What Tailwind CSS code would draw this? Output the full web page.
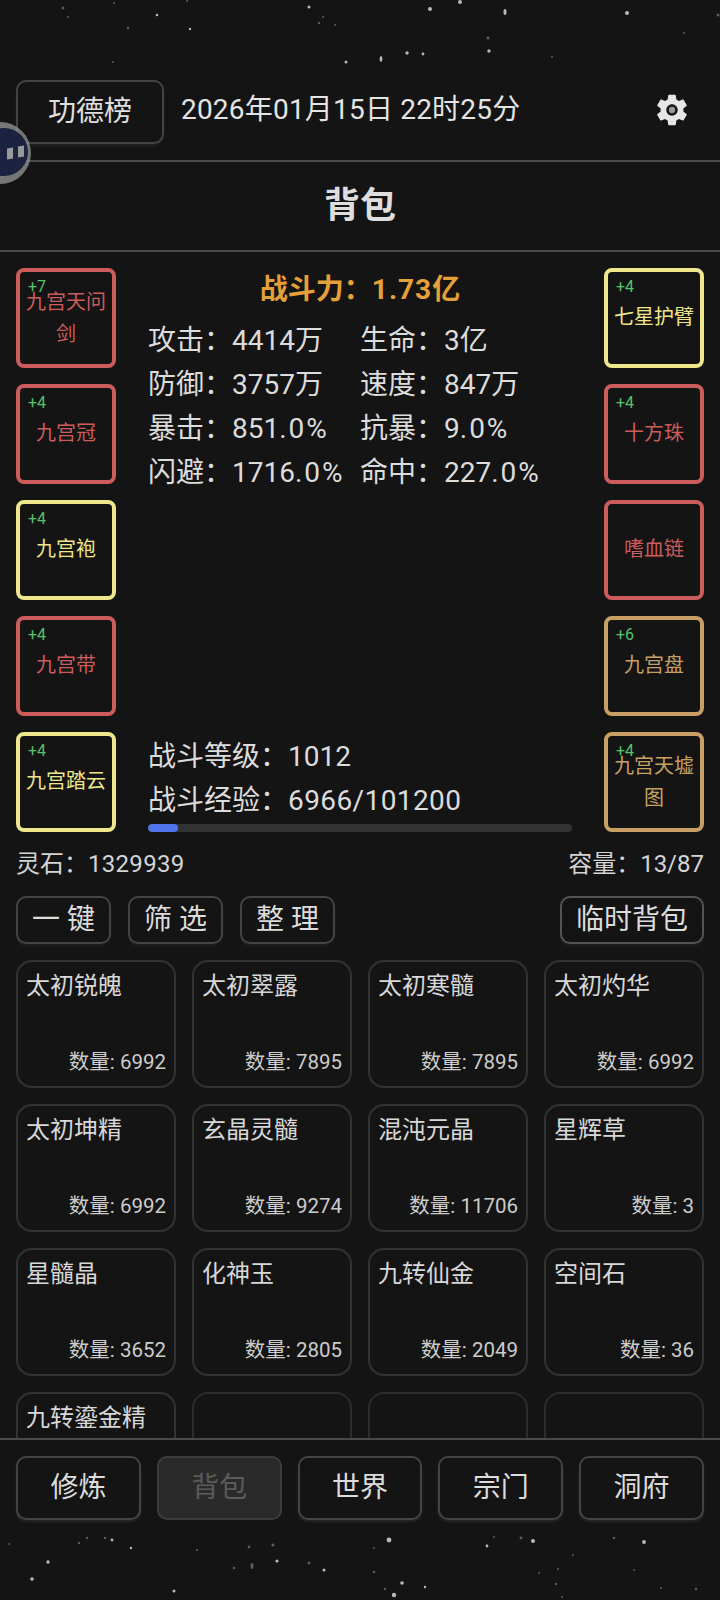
<!DOCTYPE html>
<html lang="zh-CN">
<head>
    <meta charset="UTF-8">
    <meta name="viewport" content="width=device-width, initial-scale=1.0">
    <title>背包</title>
    <script src="https://cdn.jsdelivr.net/npm/@tailwindcss/browser@4"></script>
</head>
<body class="bg-[#141414]">
<div class="relative w-[720px] h-[1600px] overflow-hidden flex flex-col bg-[#141414] text-[#e0e0e0] font-['Roboto','Noto_Sans_CJK_SC',sans-serif]">

    <!-- star background -->
    <svg class="absolute inset-0 w-[720px] h-[1600px] pointer-events-none" viewBox="0 0 720 1600" fill="#fff">
        <g opacity="0.7">
            <circle cx="430" cy="9" r="2"/><circle cx="460" cy="2" r="2"/><ellipse cx="505" cy="12" rx="1.5" ry="3"/><circle cx="627" cy="13" r="2"/>
            <circle cx="309" cy="7" r="1.5"/><circle cx="489" cy="51" r="1.7"/><circle cx="407" cy="53" r="1.7"/><circle cx="423" cy="54" r="1.4"/>
            <ellipse cx="381" cy="59" rx="1.4" ry="3"/><circle cx="346" cy="62" r="1.5"/><circle cx="157" cy="15" r="1.3"/><circle cx="190" cy="29" r="1.2"/>
            <circle cx="389" cy="1540" r="2.4"/><circle cx="644" cy="1542" r="1.9"/><circle cx="533" cy="1541" r="2"/><circle cx="487" cy="1546" r="1.4"/>
            <circle cx="112" cy="1540" r="1.4"/><circle cx="48" cy="1562" r="1.7"/><circle cx="32" cy="1579" r="1.8"/><circle cx="174" cy="1591" r="1.5"/>
            <circle cx="277" cy="1561" r="1.6"/><circle cx="324" cy="1570" r="1.5"/><circle cx="402" cy="1583" r="1.8"/><circle cx="394" cy="1595" r="2.2"/>
            <circle cx="425" cy="1587" r="1.2"/><circle cx="131" cy="1548" r="1.2"/>
        </g>
        <g opacity="0.3">
            <circle cx="63" cy="8" r="1.5"/><circle cx="68" cy="17" r="1"/><circle cx="114" cy="3" r="1"/><circle cx="128" cy="28" r="1.3"/>
            <circle cx="187" cy="1" r="1"/><circle cx="323" cy="17" r="1"/><circle cx="319" cy="23" r="1.2"/><circle cx="335" cy="25" r="1"/>
            <circle cx="718" cy="15" r="1.5"/><circle cx="488" cy="38" r="1.6"/><circle cx="113" cy="62" r="1"/><circle cx="552" cy="57" r="1"/><circle cx="684" cy="33" r="1"/>
            <circle cx="521" cy="1538" r="1.4"/><circle cx="614" cy="1538" r="1.3"/><circle cx="494" cy="1537" r="1"/><circle cx="105" cy="1538" r="1.3"/>
            <circle cx="87" cy="1538" r="1.2"/><circle cx="79" cy="1543" r="1.2"/><circle cx="249" cy="1547" r="1.4"/><circle cx="273" cy="1545" r="1.6"/>
            <circle cx="197" cy="1550" r="1.1"/><ellipse cx="252" cy="1566" rx="1.5" ry="3"/><circle cx="234" cy="1568" r="1.3"/><circle cx="309" cy="1563" r="1.4"/>
            <circle cx="374" cy="1572" r="1.3"/><circle cx="374" cy="1548" r="1"/><circle cx="385" cy="1589" r="1.2"/><circle cx="573" cy="1555" r="1"/>
            <circle cx="539" cy="1573" r="1"/><circle cx="558" cy="1569" r="1.1"/><circle cx="556" cy="1584" r="1.2"/><circle cx="562" cy="1597" r="1"/>
            <circle cx="634" cy="1570" r="1"/><circle cx="696" cy="1589" r="1.2"/><circle cx="661" cy="1588" r="1"/><circle cx="9" cy="1544" r="1"/>
        </g>
    </svg>

    <!-- top bar -->
    <div class="relative shrink-0 mt-[80px] h-[82px] border-b-2 border-[#4a4a4a] pl-4 pr-[29px] flex items-start">
        <button class="w-[148px] h-[64px] rounded-[10px] border-2 border-[#444] text-[28px] leading-8 text-[#e0e0e0] shadow-[0_2px_3px_rgba(255,255,255,0.06)]">功德榜</button>
        <div class="ml-[17px] h-[60px] flex items-center text-[28px] leading-8 tracking-[0.2px] text-[#e4e4e4]">2026年01月15日 22时25分</div>
        <svg class="ml-auto mt-[11px] w-[38px] h-[38px]" viewBox="0 0 24 24" fill="#e6e6e6">
            <path d="M19.14 12.94c.04-.3.06-.61.06-.94 0-.32-.02-.64-.07-.94l2.03-1.58c.18-.14.23-.41.12-.61l-1.92-3.32c-.12-.22-.37-.29-.59-.22l-2.39.96c-.5-.38-1.03-.7-1.62-.94l-.36-2.54c-.04-.24-.24-.41-.48-.41h-3.84c-.24 0-.43.17-.47.41l-.36 2.54c-.59.24-1.13.57-1.62.94l-2.39-.96c-.22-.08-.47 0-.59.22L2.74 8.87c-.12.21-.08.47.12.61l2.03 1.58c-.05.3-.09.63-.09.94s.02.64.07.94l-2.03 1.58c-.18.14-.23.41-.12.61l1.92 3.32c.12.22.37.29.59.22l2.39-.96c.5.38 1.03.7 1.62.94l.36 2.54c.05.24.24.41.48.41h3.84c.24 0 .44-.17.47-.41l.36-2.54c.59-.24 1.13-.56 1.62-.94l2.39.96c.22.08.47 0 .59-.22l1.92-3.32c.12-.22.07-.47-.12-.61l-2.01-1.58zM12 15.6c-1.98 0-3.6-1.62-3.6-3.6s1.62-3.6 3.6-3.6 3.6 1.62 3.6 3.6-1.62 3.6-3.6 3.6z"/>
            <circle cx="12" cy="12" r="2" fill="#999"/>
        </svg>
    </div>

    <!-- title -->
    <div class="shrink-0 h-[90px] border-b-2 border-[#4a4a4a] flex items-center justify-center text-[36px] leading-10 font-bold text-[#dedede]">背包</div>

    <div class="flex-1 min-h-0 overflow-hidden px-4">
        <!-- equipment and stats -->
        <div class="flex justify-between pt-4">
            <div class="w-[100px] flex flex-col gap-4">
                <div class="relative h-[100px] rounded-lg border-4 border-[#cd5c5c] flex items-center justify-center text-center text-[20px] leading-8 text-[#cd5c5c]"><span class="absolute left-2 top-[3px] text-[16px] leading-6 text-[#55c46a]">+7</span>九宫天问剑</div>
                <div class="relative h-[100px] rounded-lg border-4 border-[#cd5c5c] flex items-center justify-center text-center text-[20px] leading-8 text-[#cd5c5c] pb-[2px]"><span class="absolute left-2 top-[3px] text-[16px] leading-6 text-[#55c46a]">+4</span>九宫冠</div>
                <div class="relative h-[100px] rounded-lg border-4 border-[#f0e68c] flex items-center justify-center text-center text-[20px] leading-8 text-[#f0e68c] pb-[2px]"><span class="absolute left-2 top-[3px] text-[16px] leading-6 text-[#55c46a]">+4</span>九宫袍</div>
                <div class="relative h-[100px] rounded-lg border-4 border-[#cd5c5c] flex items-center justify-center text-center text-[20px] leading-8 text-[#cd5c5c] pb-[2px]"><span class="absolute left-2 top-[3px] text-[16px] leading-6 text-[#55c46a]">+4</span>九宫带</div>
                <div class="relative h-[100px] rounded-lg border-4 border-[#f0e68c] flex items-center justify-center text-center text-[20px] leading-8 text-[#f0e68c] pb-[2px]"><span class="absolute left-2 top-[3px] text-[16px] leading-6 text-[#55c46a]">+4</span>九宫踏云</div>
            </div>

            <div class="w-[424px] flex flex-col justify-between">
                <div>
                    <div class="text-center text-[28px] leading-[44px] font-bold text-[#e6a03a]">战斗力&#xFF1A;<span class="tracking-[1px]">1.73</span>亿</div>
                    <div class="grid grid-cols-[212px_1fr] text-[28px] leading-[44px] text-[#dcdcdc] mt-[7px]">
                        <div>攻击&#xFF1A;4414万</div><div>生命&#xFF1A;3亿</div>
                        <div>防御&#xFF1A;3757万</div><div>速度&#xFF1A;847万</div>
                        <div>暴击&#xFF1A;851<span class="tracking-[2px]">.0%</span></div><div>抗暴&#xFF1A;9<span class="tracking-[2px]">.0%</span></div>
                        <div>闪避&#xFF1A;1716<span class="tracking-[2px]">.0%</span></div><div>命中&#xFF1A;227<span class="tracking-[2px]">.0%</span></div>
                    </div>
                </div>
                <div>
                    <div class="text-[28px] leading-[44px] text-[#dcdcdc]">战斗等级&#xFF1A;1012</div>
                    <div class="text-[28px] leading-[44px] text-[#dcdcdc]">战斗经验&#xFF1A;<span class="tracking-[0.4px]">6966/101200</span></div>
                    <div class="mt-[1px] h-2 rounded-full bg-[#333] overflow-hidden">
                        <div class="h-2 w-[30px] rounded-full bg-[#4f74ec]"></div>
                    </div>
                </div>
            </div>

            <div class="w-[100px] flex flex-col gap-4">
                <div class="relative h-[100px] rounded-lg border-4 border-[#f0e68c] flex items-center justify-center text-center text-[20px] leading-8 text-[#f0e68c] pb-[2px]"><span class="absolute left-2 top-[3px] text-[16px] leading-6 text-[#55c46a]">+4</span>七星护臂</div>
                <div class="relative h-[100px] rounded-lg border-4 border-[#cd5c5c] flex items-center justify-center text-center text-[20px] leading-8 text-[#cd5c5c] pb-[2px]"><span class="absolute left-2 top-[3px] text-[16px] leading-6 text-[#55c46a]">+4</span>十方珠</div>
                <div class="relative h-[100px] rounded-lg border-4 border-[#cd5c5c] flex items-center justify-center text-center text-[20px] leading-8 text-[#cd5c5c] pb-[2px]">嗜血链</div>
                <div class="relative h-[100px] rounded-lg border-4 border-[#c9a063] flex items-center justify-center text-center text-[20px] leading-8 text-[#c9a063] pb-[2px]"><span class="absolute left-2 top-[3px] text-[16px] leading-6 text-[#55c46a]">+6</span>九宫盘</div>
                <div class="relative h-[100px] rounded-lg border-4 border-[#c9a063] flex items-center justify-center text-center text-[20px] leading-8 text-[#c9a063]"><span class="absolute left-2 top-[3px] text-[16px] leading-6 text-[#55c46a]">+4</span>九宫天墟图</div>
            </div>
        </div>

        <!-- currency row -->
        <div class="mt-[18px] flex justify-between text-[24px] leading-7 text-[#d4d4d4]">
            <div>灵石&#xFF1A;<span class="tracking-[0.3px]">1329939</span></div>
            <div>容量&#xFF1A;13/87</div>
        </div>

        <!-- actions -->
        <div class="mt-[18px] flex gap-[17px]">
            <button class="w-[95px] h-[48px] rounded-[10px] border-2 border-[#444] text-[28px] leading-8 text-[#dcdcdc] shadow-[0_2px_3px_rgba(255,255,255,0.05)]">一 键</button>
            <button class="w-[95px] h-[48px] rounded-[10px] border-2 border-[#444] text-[28px] leading-8 text-[#dcdcdc] shadow-[0_2px_3px_rgba(255,255,255,0.05)]">筛 选</button>
            <button class="w-[95px] h-[48px] rounded-[10px] border-2 border-[#444] text-[28px] leading-8 text-[#dcdcdc] shadow-[0_2px_3px_rgba(255,255,255,0.05)]">整 理</button>
            <button class="ml-auto w-[144px] h-[48px] rounded-[10px] border-2 border-[#555] text-[28px] leading-8 text-[#dcdcdc] shadow-[0_2px_3px_rgba(255,255,255,0.05)]">临时背包</button>
        </div>

        <!-- bag grid -->
        <div class="mt-4 grid grid-cols-4 gap-4">
            <div class="h-[128px] rounded-2xl border-2 border-[#333] pl-2 pr-2 pt-2 pb-[10px] flex flex-col justify-between"><div class="text-[24px] leading-8 text-[#d8d8d8]">太初锐魄</div><div class="text-right text-[20.5px] leading-7 text-[#cccccc]">数量: 6992</div></div>
            <div class="h-[128px] rounded-2xl border-2 border-[#333] pl-2 pr-2 pt-2 pb-[10px] flex flex-col justify-between"><div class="text-[24px] leading-8 text-[#d8d8d8]">太初翠露</div><div class="text-right text-[20.5px] leading-7 text-[#cccccc]">数量: 7895</div></div>
            <div class="h-[128px] rounded-2xl border-2 border-[#333] pl-2 pr-2 pt-2 pb-[10px] flex flex-col justify-between"><div class="text-[24px] leading-8 text-[#d8d8d8]">太初寒髓</div><div class="text-right text-[20.5px] leading-7 text-[#cccccc]">数量: 7895</div></div>
            <div class="h-[128px] rounded-2xl border-2 border-[#333] pl-2 pr-2 pt-2 pb-[10px] flex flex-col justify-between"><div class="text-[24px] leading-8 text-[#d8d8d8]">太初灼华</div><div class="text-right text-[20.5px] leading-7 text-[#cccccc]">数量: 6992</div></div>

            <div class="h-[128px] rounded-2xl border-2 border-[#333] pl-2 pr-2 pt-2 pb-[10px] flex flex-col justify-between"><div class="text-[24px] leading-8 text-[#d8d8d8]">太初坤精</div><div class="text-right text-[20.5px] leading-7 text-[#cccccc]">数量: 6992</div></div>
            <div class="h-[128px] rounded-2xl border-2 border-[#333] pl-2 pr-2 pt-2 pb-[10px] flex flex-col justify-between"><div class="text-[24px] leading-8 text-[#d8d8d8]">玄晶灵髓</div><div class="text-right text-[20.5px] leading-7 text-[#cccccc]">数量: 9274</div></div>
            <div class="h-[128px] rounded-2xl border-2 border-[#333] pl-2 pr-2 pt-2 pb-[10px] flex flex-col justify-between"><div class="text-[24px] leading-8 text-[#d8d8d8]">混沌元晶</div><div class="text-right text-[20.5px] leading-7 text-[#cccccc]">数量: 11706</div></div>
            <div class="h-[128px] rounded-2xl border-2 border-[#333] pl-2 pr-2 pt-2 pb-[10px] flex flex-col justify-between"><div class="text-[24px] leading-8 text-[#d8d8d8]">星辉草</div><div class="text-right text-[20.5px] leading-7 text-[#cccccc]">数量: 3</div></div>

            <div class="h-[128px] rounded-2xl border-2 border-[#333] pl-2 pr-2 pt-2 pb-[10px] flex flex-col justify-between"><div class="text-[24px] leading-8 text-[#d8d8d8]">星髓晶</div><div class="text-right text-[20.5px] leading-7 text-[#cccccc]">数量: 3652</div></div>
            <div class="h-[128px] rounded-2xl border-2 border-[#333] pl-2 pr-2 pt-2 pb-[10px] flex flex-col justify-between"><div class="text-[24px] leading-8 text-[#d8d8d8]">化神玉</div><div class="text-right text-[20.5px] leading-7 text-[#cccccc]">数量: 2805</div></div>
            <div class="h-[128px] rounded-2xl border-2 border-[#333] pl-2 pr-2 pt-2 pb-[10px] flex flex-col justify-between"><div class="text-[24px] leading-8 text-[#d8d8d8]">九转仙金</div><div class="text-right text-[20.5px] leading-7 text-[#cccccc]">数量: 2049</div></div>
            <div class="h-[128px] rounded-2xl border-2 border-[#333] pl-2 pr-2 pt-2 pb-[10px] flex flex-col justify-between"><div class="text-[24px] leading-8 text-[#d8d8d8]">空间石</div><div class="text-right text-[20.5px] leading-7 text-[#cccccc]">数量: 36</div></div>

            <div class="h-[128px] rounded-2xl border-2 border-[#333] pl-2 pr-2 pt-2 pb-[10px] flex flex-col justify-between"><div class="text-[24px] leading-8 text-[#d8d8d8]">九转鎏金精</div></div>
            <div class="h-[128px] rounded-2xl border-2 border-[#2c2c2c]"></div>
            <div class="h-[128px] rounded-2xl border-2 border-[#2c2c2c]"></div>
            <div class="h-[128px] rounded-2xl border-2 border-[#2c2c2c]"></div>
        </div>
    </div>

    <!-- bottom nav -->
    <div class="relative shrink-0 h-[162px] border-t-2 border-[#4a4a4a] px-4 pt-4">
        <div class="flex gap-4">
            <button class="flex-1 h-[64px] rounded-[10px] border-2 border-[#444] text-[28px] leading-8 text-[#dcdcdc] shadow-[0_2px_3px_rgba(255,255,255,0.08)]">修炼</button>
            <button class="flex-1 h-[64px] rounded-[10px] border-2 border-[#3c3c3c] bg-[#2a2a2a] text-[28px] leading-8 text-[#5a5a5a]">背包</button>
            <button class="flex-1 h-[64px] rounded-[10px] border-2 border-[#444] text-[28px] leading-8 text-[#dcdcdc] shadow-[0_2px_3px_rgba(255,255,255,0.08)]">世界</button>
            <button class="flex-1 h-[64px] rounded-[10px] border-2 border-[#444] text-[28px] leading-8 text-[#dcdcdc] shadow-[0_2px_3px_rgba(255,255,255,0.08)]">宗门</button>
            <button class="flex-1 h-[64px] rounded-[10px] border-2 border-[#444] text-[28px] leading-8 text-[#dcdcdc] shadow-[0_2px_3px_rgba(255,255,255,0.08)]">洞府</button>
        </div>
    </div>

    <!-- floating ball -->
    <div class="absolute left-[-31px] top-[122px] w-[62px] h-[62px] rounded-full bg-[#a0a0a0]/70 flex items-center justify-center">
        <div class="w-[48px] h-[48px] rounded-full bg-[#1b2340] translate-x-[4px] -translate-y-[1px] flex items-center justify-center">
            <div class="flex gap-[5px] translate-x-[11px] -skew-y-[10deg]">
                <div class="w-[6px] h-[11px] bg-[#999]"></div>
                <div class="w-[6px] h-[11px] bg-[#999]"></div>
            </div>
        </div>
    </div>
</div>
</body>
</html>
